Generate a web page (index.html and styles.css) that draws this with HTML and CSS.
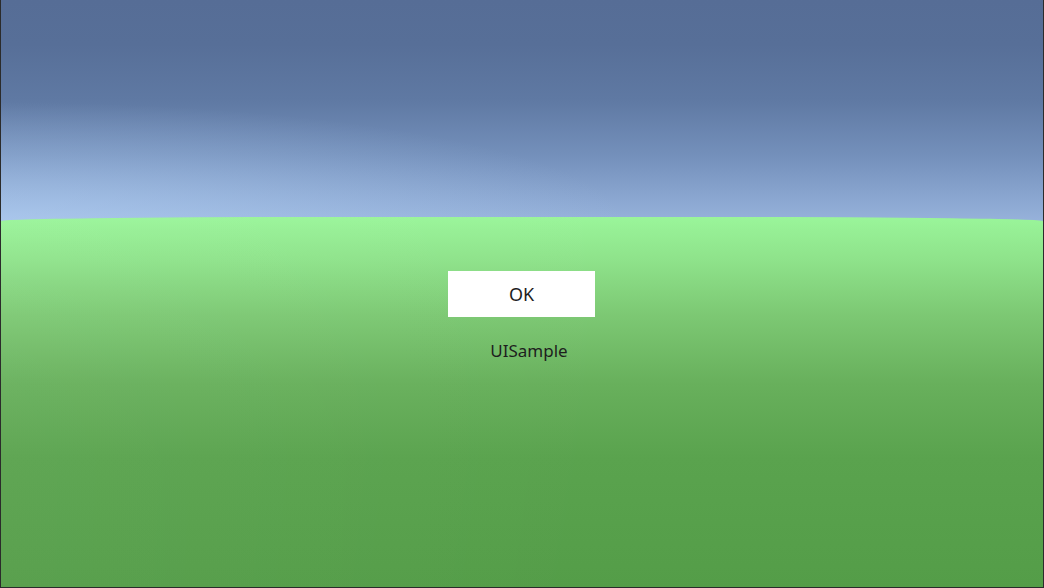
FILE: index.html
```html
<!DOCTYPE html>
<html>
<head>
<meta charset="utf-8">
<link rel="stylesheet" href="styles.css">
</head>
<body>
<div class="scene">
  <div class="ground">
    <button class="ok-btn">OK</button>
    <div class="label">UISample</div>
  </div>
</div>
</body>
</html>
```
FILE: styles.css
```css
html, body {
  margin: 0;
  padding: 0;
  width: 1044px;
  height: 588px;
  overflow: hidden;
  background: #2a2a2a;
}
.scene {
  box-sizing: border-box;
  width: 1044px;
  height: 588px;
  border-left: 1px solid #2b2b2b;
  border-right: 1px solid #2b2b2b;
  border-bottom: 1px solid #2b2b2b;
  display: flex;
  flex-direction: column;
  background-color: #9ab5de;
  background-image:
    radial-gradient(ellipse 60% 120px at 0% 100%, rgba(185,215,250,0.55) 0%, rgba(185,215,250,0) 100%),
    linear-gradient(180deg, #566d96 0%, #576f98 20%, #5f79a3 45%, #7490bb 70%, #8ba7d1 90%, #97b2db 100%);
  background-size: 100% 222px, 100% 222px;
  background-repeat: no-repeat;
}
.ground {
  margin-top: 217px;
  flex: 1;
  display: flex;
  flex-direction: column;
  align-items: center;
  border-radius: 30% 30% 0 0 / 4px 4px 0 0;
  background:
    linear-gradient(100deg, rgba(255,255,255,0.04) 0%, rgba(255,255,255,0) 60%),
    linear-gradient(180deg, #9af59a 0%, #8ee28a 12%, #7dc974 26%, #68b05c 45%, #5aa34e 65%, #549d48 100%);
  font-family: "Noto Sans", "Open Sans", sans-serif;
  color: #1e1e1e;
}
.ok-btn {
  margin-top: 54px;
  margin-right: 1px;
  width: 147px;
  height: 46px;
  border: none;
  background: #ffffff;
  font-family: "Noto Sans", "Open Sans", sans-serif;
  font-size: 18px;
  color: #1e1e1e;
  padding: 0;
}
.label {
  margin-top: 22px;
  margin-left: 14px;
  font-size: 17px;
  line-height: 24px;
}
```
